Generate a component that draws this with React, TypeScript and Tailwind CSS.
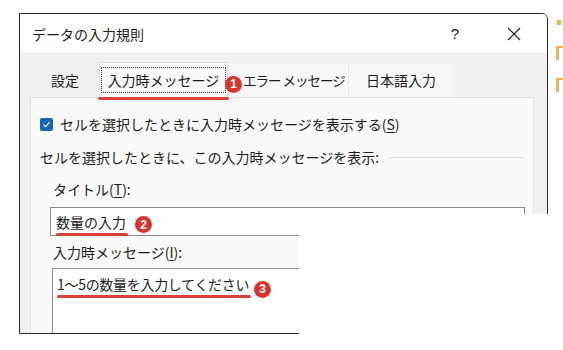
import React from "react";

const Badge = ({ n }: { n: string }) => (
  <span className="inline-flex items-center justify-center w-[17px] h-[17px] rounded-full bg-[#d8342c] text-white text-[12px] font-bold leading-none [font-family:'Liberation_Sans',Arial,sans-serif]">
    {n}
  </span>
);

export default function App() {
  return (
    <div className="relative w-[563px] h-[350px] bg-white overflow-hidden text-[#1b1b1b] [font-family:'Noto_Sans_CJK_JP','Noto_Sans',sans-serif]">
      <div className="pt-[13px] pl-[19px]">
        <div className="w-[529px] h-[321px] border-[1.5px] border-[#2a2a2a] rounded-tr-[6px] overflow-hidden flex flex-col bg-[#f0f0f0]">
          {/* title bar */}
          <div className="h-[39px] bg-white flex items-center pl-[12px] shrink-0">
            <span className="text-[14px] leading-none">データの入力規則</span>
            <span className="ml-auto mr-[48px] text-[15px] leading-none [font-family:'Liberation_Sans',sans-serif]">?</span>
            <svg width="14" height="14" viewBox="0 0 14 14" className="mr-[26px]">
              <path d="M1 1 L13 13 M13 1 L1 13" stroke="#222" strokeWidth="1.2" fill="none" />
            </svg>
          </div>
          {/* tabs */}
          <div className="flex items-end pl-[11px] pt-[10px] h-[44px] shrink-0">
            <div className="h-[33px] w-[68px] flex items-center justify-center text-[14px] bg-[#f0f0f0]">
              設定
            </div>
            <div className="relative h-[35px] w-[129px] flex items-center justify-center text-[14px] bg-[#f9f9f9] border border-b-0 border-[#dcdcdc]">
              <span className="border border-dotted border-[#333] px-[6px] h-[26px] flex items-center whitespace-nowrap">入力時メッセージ</span>
              <div className="absolute left-[-2px] right-[-2px] bottom-[-3px] h-[3px] rounded-full bg-[#d9403a]" />
              <div className="absolute right-[-15px] top-[9px]">
                <Badge n="1" />
              </div>
            </div>
            <div className="h-[33px] w-[120px] flex items-center text-[13.5px] bg-[#f7f7f7] pl-[15px] whitespace-nowrap tracking-[-1px]">
              エラー メッセージ
            </div>
            <div className="h-[33px] w-[105px] flex items-center justify-center text-[14px] bg-[#f7f7f7] border-l border-[#e6e6e6] whitespace-nowrap">
              日本語入力
            </div>
          </div>
          {/* panel */}
          <div className="flex-1 ml-[10px] mr-[13px] bg-[#f9f9f9] border border-[#e2e2e2] border-b-0 pl-[9px] pr-[8px]">
            <div className="flex items-center mt-[16px] h-[20px]">
              <span className="w-[13px] h-[13px] rounded-[2px] bg-[#1565b8] flex items-center justify-center">
                <svg width="9" height="9" viewBox="0 0 9 9">
                  <path d="M1.5 4.6 L3.6 6.6 L7.6 2.2" stroke="white" strokeWidth="1.2" fill="none" />
                </svg>
              </span>
              <span className="ml-[7px] text-[14px] leading-none">
                セルを選択したときに入力時メッセージを表示する(<span className="underline underline-offset-2">S</span>)
              </span>
            </div>
            <div className="flex items-center mt-[13px] h-[20px]">
              <span className="text-[14px] leading-none">セルを選択したときに、この入力時メッセージを表示:</span>
              <div className="flex-1 ml-[10px] h-px bg-[#dcdcdc]" />
            </div>
            <div className="ml-[10px]">
              <div className="mt-[12px] h-[20px] flex items-center pl-[3px] text-[14px] leading-none">
                タイトル(<span className="underline underline-offset-2">T</span>):
              </div>
              <div className="mt-[8px] h-[29px] border border-[#8a8a8a] bg-white flex items-center pl-[5px]">
                <span className="relative text-[14px] leading-none">
                  数量の入力
                  <span className="absolute left-0 right-[-2px] bottom-[-7px] h-[3px] rounded-full bg-[#d9403a]" />
                </span>
                <span className="ml-[9px]">
                  <Badge n="2" />
                </span>
              </div>
              <div className="mt-[6px] h-[20px] flex items-center pl-[3px] text-[14px] leading-none">
                入力時メッセージ(<span className="underline underline-offset-2">I</span>):
              </div>
              <div className="mt-[6px] ml-[2px] h-[80px] border border-[#8a8a8a] bg-white pl-[4px] pt-[5px]">
                <div className="flex items-center h-[20px]">
                  <span className="relative text-[14px] leading-none tracking-[-0.3px]">
                    1〜5の数量を入力してください
                    <span className="absolute left-0 right-[-2px] bottom-[-7px] h-[3px] rounded-full bg-[#d9403a]" />
                  </span>
                  <span className="ml-[5px] mt-[4px]">
                    <Badge n="3" />
                  </span>
                </div>
              </div>
            </div>
          </div>
        </div>
      </div>
      {/* white cut-out covering the lower right of the dialog */}
      <div className="absolute left-[299px] top-[214px] right-0 bottom-0 bg-white" />
      {/* orange fragments at the right edge */}
      <div className="absolute left-[557px] top-[20px] w-[4px] h-[5px] bg-[#f2b24a]" />
      <div className="absolute left-[556px] top-[46px] w-[3px] h-[14px] bg-[#f2b24a]" />
      <div className="absolute left-[556px] top-[46px] w-[7px] h-[2px] bg-[#f2b24a]" />
      <div className="absolute left-[556px] top-[78px] w-[3px] h-[14px] bg-[#f2b24a]" />
      <div className="absolute left-[556px] top-[78px] w-[7px] h-[2px] bg-[#f2b24a]" />
    </div>
  );
}
